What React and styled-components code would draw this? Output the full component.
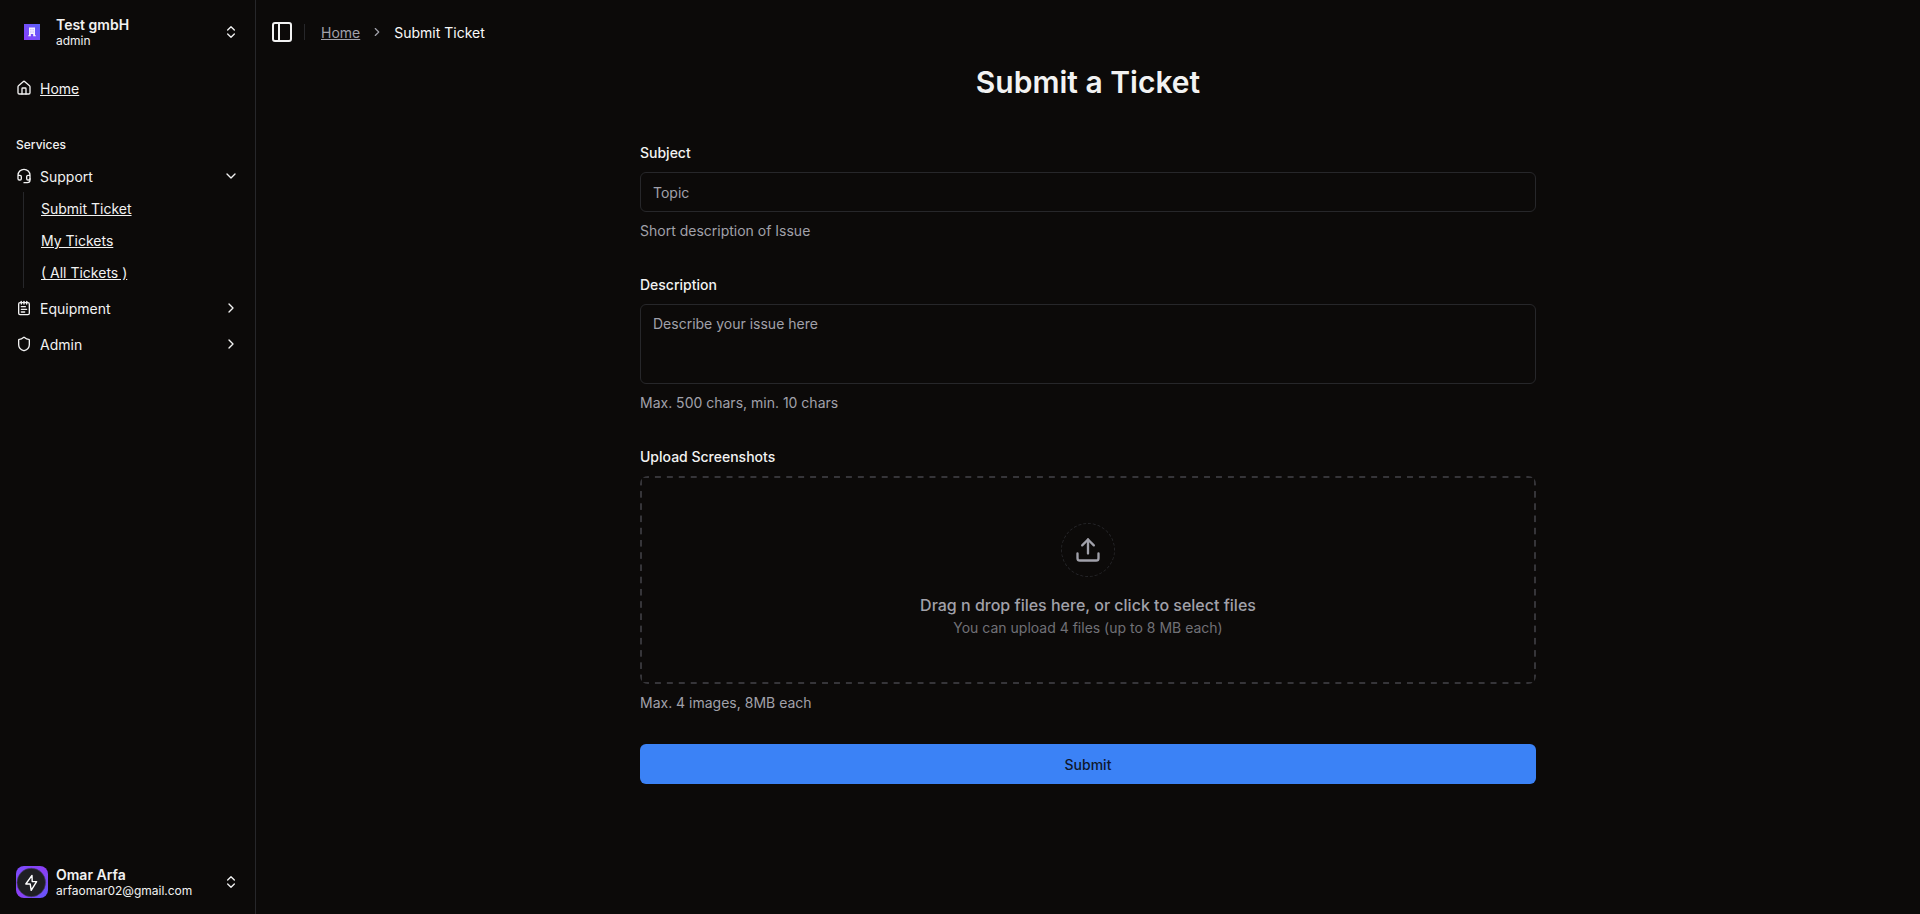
import React from 'react';
import styled, { createGlobalStyle, css } from 'styled-components';
import {
  House, Headset, NotepadText, Shield, ChevronRight, ChevronDown,
  ChevronsUpDown, PanelLeft, Upload,
} from 'lucide-react';

const colors = {
  bg: '#0c0a09',
  text: '#f2f2f2',
  muted: '#a1a1aa',
  border: '#27272a',
  dashed: '#363539',
  primary: '#3b82f6',
  onPrimary: '#0f172a',
};

const GlobalStyle = createGlobalStyle`
  *, *::before, *::after { box-sizing: border-box; }
  body {
    margin: 0;
    background: ${colors.bg};
    color: ${colors.text};
    font: 400 14px/20px Inter, sans-serif;
  }
  button, input, textarea { font: inherit; color: inherit; }
`;

const Layout = styled.div`
  display: flex;
  min-height: 100vh;
`;

const Sidebar = styled.aside`
  position: sticky;
  top: 0;
  display: flex;
  flex-direction: column;
  flex: 0 0 256px;
  height: 100vh;
  border-right: 1px solid ${colors.border};
`;

const SidebarSection = styled.div`
  display: flex;
  flex-direction: column;
  padding: 8px;
`;

const SidebarNav = styled.nav`
  flex: 1;
  display: flex;
  flex-direction: column;
  gap: 8px;
`;

const rowStyle = css`
  display: flex;
  align-items: center;
  gap: 8px;
  width: 100%;
  padding: 8px;
  border: 0;
  border-radius: 6px;
  background: transparent;
  color: ${colors.text};
  text-align: left;
  cursor: pointer;
  svg { flex: none; }
`;

const AccountButton = styled.button`
  ${rowStyle}
  height: 48px;
`;

const AccountMark = styled.span`
  display: flex;
  align-items: center;
  justify-content: center;
  width: 32px;
  height: 32px;
`;

const AccountText = styled.span`
  flex: 1;
  display: grid;
  line-height: 17px;
`;

const AccountName = styled.span`
  font-weight: 600;
`;

const AccountDetail = styled.span`
  font-size: 12px;
  line-height: 15px;
`;

const NavLink = styled.a`
  ${rowStyle}
  height: 32px;
  text-decoration: underline;
`;

const NavButton = styled.button`
  ${rowStyle}
  height: 32px;
`;

const NavLabel = styled.span`
  flex: 1;
  padding-top: 2px;
`;

const NavList = styled.div`
  display: flex;
  flex-direction: column;
  gap: 4px;
`;

const GroupLabel = styled.h2`
  display: flex;
  align-items: center;
  height: 32px;
  margin: 0;
  padding: 2px 8px 0;
  font-size: 12px;
  font-weight: 500;
`;

const SubMenu = styled.ul`
  display: flex;
  flex-direction: column;
  gap: 4px;
  margin: 0 15px;
  padding: 2px 10px;
  border-left: 1px solid ${colors.border};
  list-style: none;
`;

const SubLink = styled.a`
  display: flex;
  align-items: center;
  height: 28px;
  padding: 2px 7px 0;
  color: ${colors.text};
`;

const NavGroup = styled.div`
  display: flex;
  flex-direction: column;
`;

const Main = styled.main`
  flex: 1;
  min-width: 0;
`;

const TopBar = styled.header`
  display: flex;
  align-items: center;
  gap: 8px;
  height: 64px;
  padding: 0 12px;
`;

const IconButton = styled.button`
  display: flex;
  align-items: center;
  justify-content: center;
  width: 28px;
  height: 28px;
  padding: 0;
  border: 0;
  background: transparent;
  cursor: pointer;
`;

const Divider = styled.span`
  width: 1px;
  height: 16px;
  margin-right: 8px;
  background: ${colors.border};
`;

const Breadcrumbs = styled.nav`
  display: flex;
  align-items: center;
  gap: 10px;
  color: ${colors.muted};
`;

const CrumbLink = styled.a`
  padding-top: 2px;
  color: inherit;
`;

const CurrentCrumb = styled.span`
  padding-top: 2px;
  color: #fafafa;
`;

const Content = styled.div`
  max-width: 896px;
  margin: 0 auto;
`;

const Title = styled.h1`
  margin: 0 0 40px;
  font-size: 30px;
  font-weight: 600;
  line-height: 36px;
  text-align: center;
`;

const Form = styled.form`
  display: flex;
  flex-direction: column;
  gap: 32px;
`;

const Field = styled.div`
  display: flex;
  flex-direction: column;
  gap: 8px;
`;

const Label = styled.label`
  padding-top: 2px;
  font-weight: 500;
  line-height: 22px;
`;

const Hint = styled.p`
  height: 20px;
  margin: 0;
  color: ${colors.muted};
  line-height: 22px;
`;

const controlStyle = css`
  width: 100%;
  border: 1px solid ${colors.border};
  border-radius: 6px;
  background: transparent;
  outline-color: ${colors.primary};
  &::placeholder { color: ${colors.muted}; opacity: 1; }
`;

const TextInput = styled.input`
  ${controlStyle}
  height: 40px;
  padding: 8px 12px;
`;

const TextArea = styled.textarea`
  ${controlStyle}
  height: 80px;
  padding: 9px 12px;
  resize: none;
`;

const dashes = (angle) =>
  `linear-gradient(${angle}, transparent 3px, ${colors.dashed} 3px 9px, transparent 9px)`;

const DropZone = styled.label`
  display: flex;
  flex-direction: column;
  align-items: center;
  justify-content: center;
  gap: 16px;
  height: 208px;
  border-radius: 8px;
  background-image: ${dashes('90deg')}, ${dashes('90deg')}, ${dashes('180deg')}, ${dashes('180deg')};
  background-size: 12px 2px, 12px 2px, 2px 12px, 2px 12px;
  background-position: left top, left bottom, left top, right top;
  background-repeat: round no-repeat, round no-repeat, no-repeat round, no-repeat round;
  color: ${colors.muted};
  text-align: center;
  cursor: pointer;
`;

const FileInput = styled.input`
  position: absolute;
  width: 1px;
  height: 1px;
  opacity: 0;
`;

const UploadBadge = styled.span`
  display: flex;
  padding: 12px;
  border: 1px dashed ${colors.border};
  border-radius: 50%;
`;

const DropText = styled.span`
  display: flex;
  flex-direction: column;
  gap: 1px;
`;

const DropTitle = styled.span`
  font-size: 16px;
  font-weight: 500;
  line-height: 24px;
`;

const DropDetail = styled.span`
  color: #717177;
`;

const SubmitButton = styled.button`
  height: 40px;
  padding: 2px 16px 0;
  border: 0;
  border-radius: 6px;
  background: ${colors.primary};
  color: ${colors.onPrimary};
  font-weight: 500;
  cursor: pointer;
`;

function CompanyLogo() {
  return (
    <svg width="16" height="16" viewBox="0 0 16 16" aria-hidden="true">
      <defs>
        <linearGradient id="company" x1="0" y1="1" x2="1" y2="0">
          <stop offset="0" stopColor="#8a3dfa" />
          <stop offset="1" stopColor="#5a62fa" />
        </linearGradient>
      </defs>
      <rect width="16" height="16" fill="url(#company)" />
      <path fill="#f6f2ff" d="M5 3.6h6v7.6h.8v1H9.2V10H6.8v2.2H4.2v-1H5z" />
      <path fill="#a58ffb" d="M6.4 5.2h1v1h-1zM8.6 5.2h1v1h-1zM6.4 7.4h1v1h-1zM8.6 7.4h1v1h-1z" />
    </svg>
  );
}

function Avatar() {
  return (
    <svg width="32" height="32" viewBox="0 0 32 32" aria-hidden="true">
      <defs>
        <linearGradient id="avatar" x1="0" y1="0" x2="1" y2="1">
          <stop offset="0" stopColor="#7c4dff" />
          <stop offset=".5" stopColor="#8b3ff5" />
          <stop offset="1" stopColor="#6258fa" />
        </linearGradient>
      </defs>
      <rect width="32" height="32" rx="8" fill="url(#avatar)" />
      <circle cx="15.3" cy="16.5" r="14.3" fill="#1f1f23" stroke="#4b3f78" strokeWidth=".6" />
      <path
        d="M16 9.4 9.8 18h4.4l1 6.4 5.4-8.8h-4.4z"
        fill="none"
        stroke="#fff"
        strokeWidth="1.4"
        strokeLinejoin="round"
      />
    </svg>
  );
}

function Account({ mark, name, detail }) {
  return (
    <AccountButton type="button">
      <AccountMark>{mark}</AccountMark>
      <AccountText>
        <AccountName>{name}</AccountName>
        <AccountDetail>{detail}</AccountDetail>
      </AccountText>
      <ChevronsUpDown size={16} />
    </AccountButton>
  );
}

function NavItem({ icon: Icon, label, open, children }) {
  const Chevron = open ? ChevronDown : ChevronRight;
  return (
    <NavGroup>
      <NavButton type="button" aria-expanded={!!open}>
        <Icon size={16} />
        <NavLabel>{label}</NavLabel>
        <Chevron size={16} />
      </NavButton>
      {open && <SubMenu>{children}</SubMenu>}
    </NavGroup>
  );
}

const supportLinks = ['Submit Ticket', 'My Tickets', '( All Tickets )'];

export default function App() {
  return (
    <>
      <GlobalStyle />
      <Layout>
        <Sidebar>
          <SidebarSection>
            <Account mark={<CompanyLogo />} name="Test gmbH" detail="admin" />
          </SidebarSection>
          <SidebarNav>
            <SidebarSection>
              <NavLink href="#home">
                <House size={16} />
                <NavLabel>Home</NavLabel>
              </NavLink>
            </SidebarSection>
            <SidebarSection>
              <GroupLabel>Services</GroupLabel>
              <NavList>
                <NavItem icon={Headset} label="Support" open>
                  {supportLinks.map((label) => (
                    <li key={label}>
                      <SubLink href="#tickets">{label}</SubLink>
                    </li>
                  ))}
                </NavItem>
                <NavItem icon={NotepadText} label="Equipment" />
                <NavItem icon={Shield} label="Admin" />
              </NavList>
            </SidebarSection>
          </SidebarNav>
          <SidebarSection>
            <Account mark={<Avatar />} name="Omar Arfa" detail="arfaomar02@gmail.com" />
          </SidebarSection>
        </Sidebar>
        <Main>
          <TopBar>
            <IconButton type="button" aria-label="Toggle sidebar">
              <PanelLeft size={24} />
            </IconButton>
            <Divider />
            <Breadcrumbs aria-label="Breadcrumb">
              <CrumbLink href="#home">Home</CrumbLink>
              <ChevronRight size={14} />
              <CurrentCrumb aria-current="page">Submit Ticket</CurrentCrumb>
            </Breadcrumbs>
          </TopBar>
          <Content>
            <Title>Submit a Ticket</Title>
            <Form onSubmit={(e) => e.preventDefault()}>
              <Field>
                <Label htmlFor="subject">Subject</Label>
                <TextInput id="subject" type="text" placeholder="Topic" />
                <Hint>Short description of Issue</Hint>
              </Field>
              <Field>
                <Label htmlFor="description">Description</Label>
                <TextArea id="description" placeholder="Describe your issue here" />
                <Hint>Max. 500 chars, min. 10 chars</Hint>
              </Field>
              <Field>
                <Label htmlFor="screenshots">Upload Screenshots</Label>
                <DropZone>
                  <FileInput id="screenshots" type="file" accept="image/*" multiple />
                  <UploadBadge>
                    <Upload size={28} />
                  </UploadBadge>
                  <DropText>
                    <DropTitle>Drag n drop files here, or click to select files</DropTitle>
                    <DropDetail>You can upload 4 files (up to 8 MB each)</DropDetail>
                  </DropText>
                </DropZone>
                <Hint>Max. 4 images, 8MB each</Hint>
              </Field>
              <SubmitButton type="submit">Submit</SubmitButton>
            </Form>
          </Content>
        </Main>
      </Layout>
    </>
  );
}
